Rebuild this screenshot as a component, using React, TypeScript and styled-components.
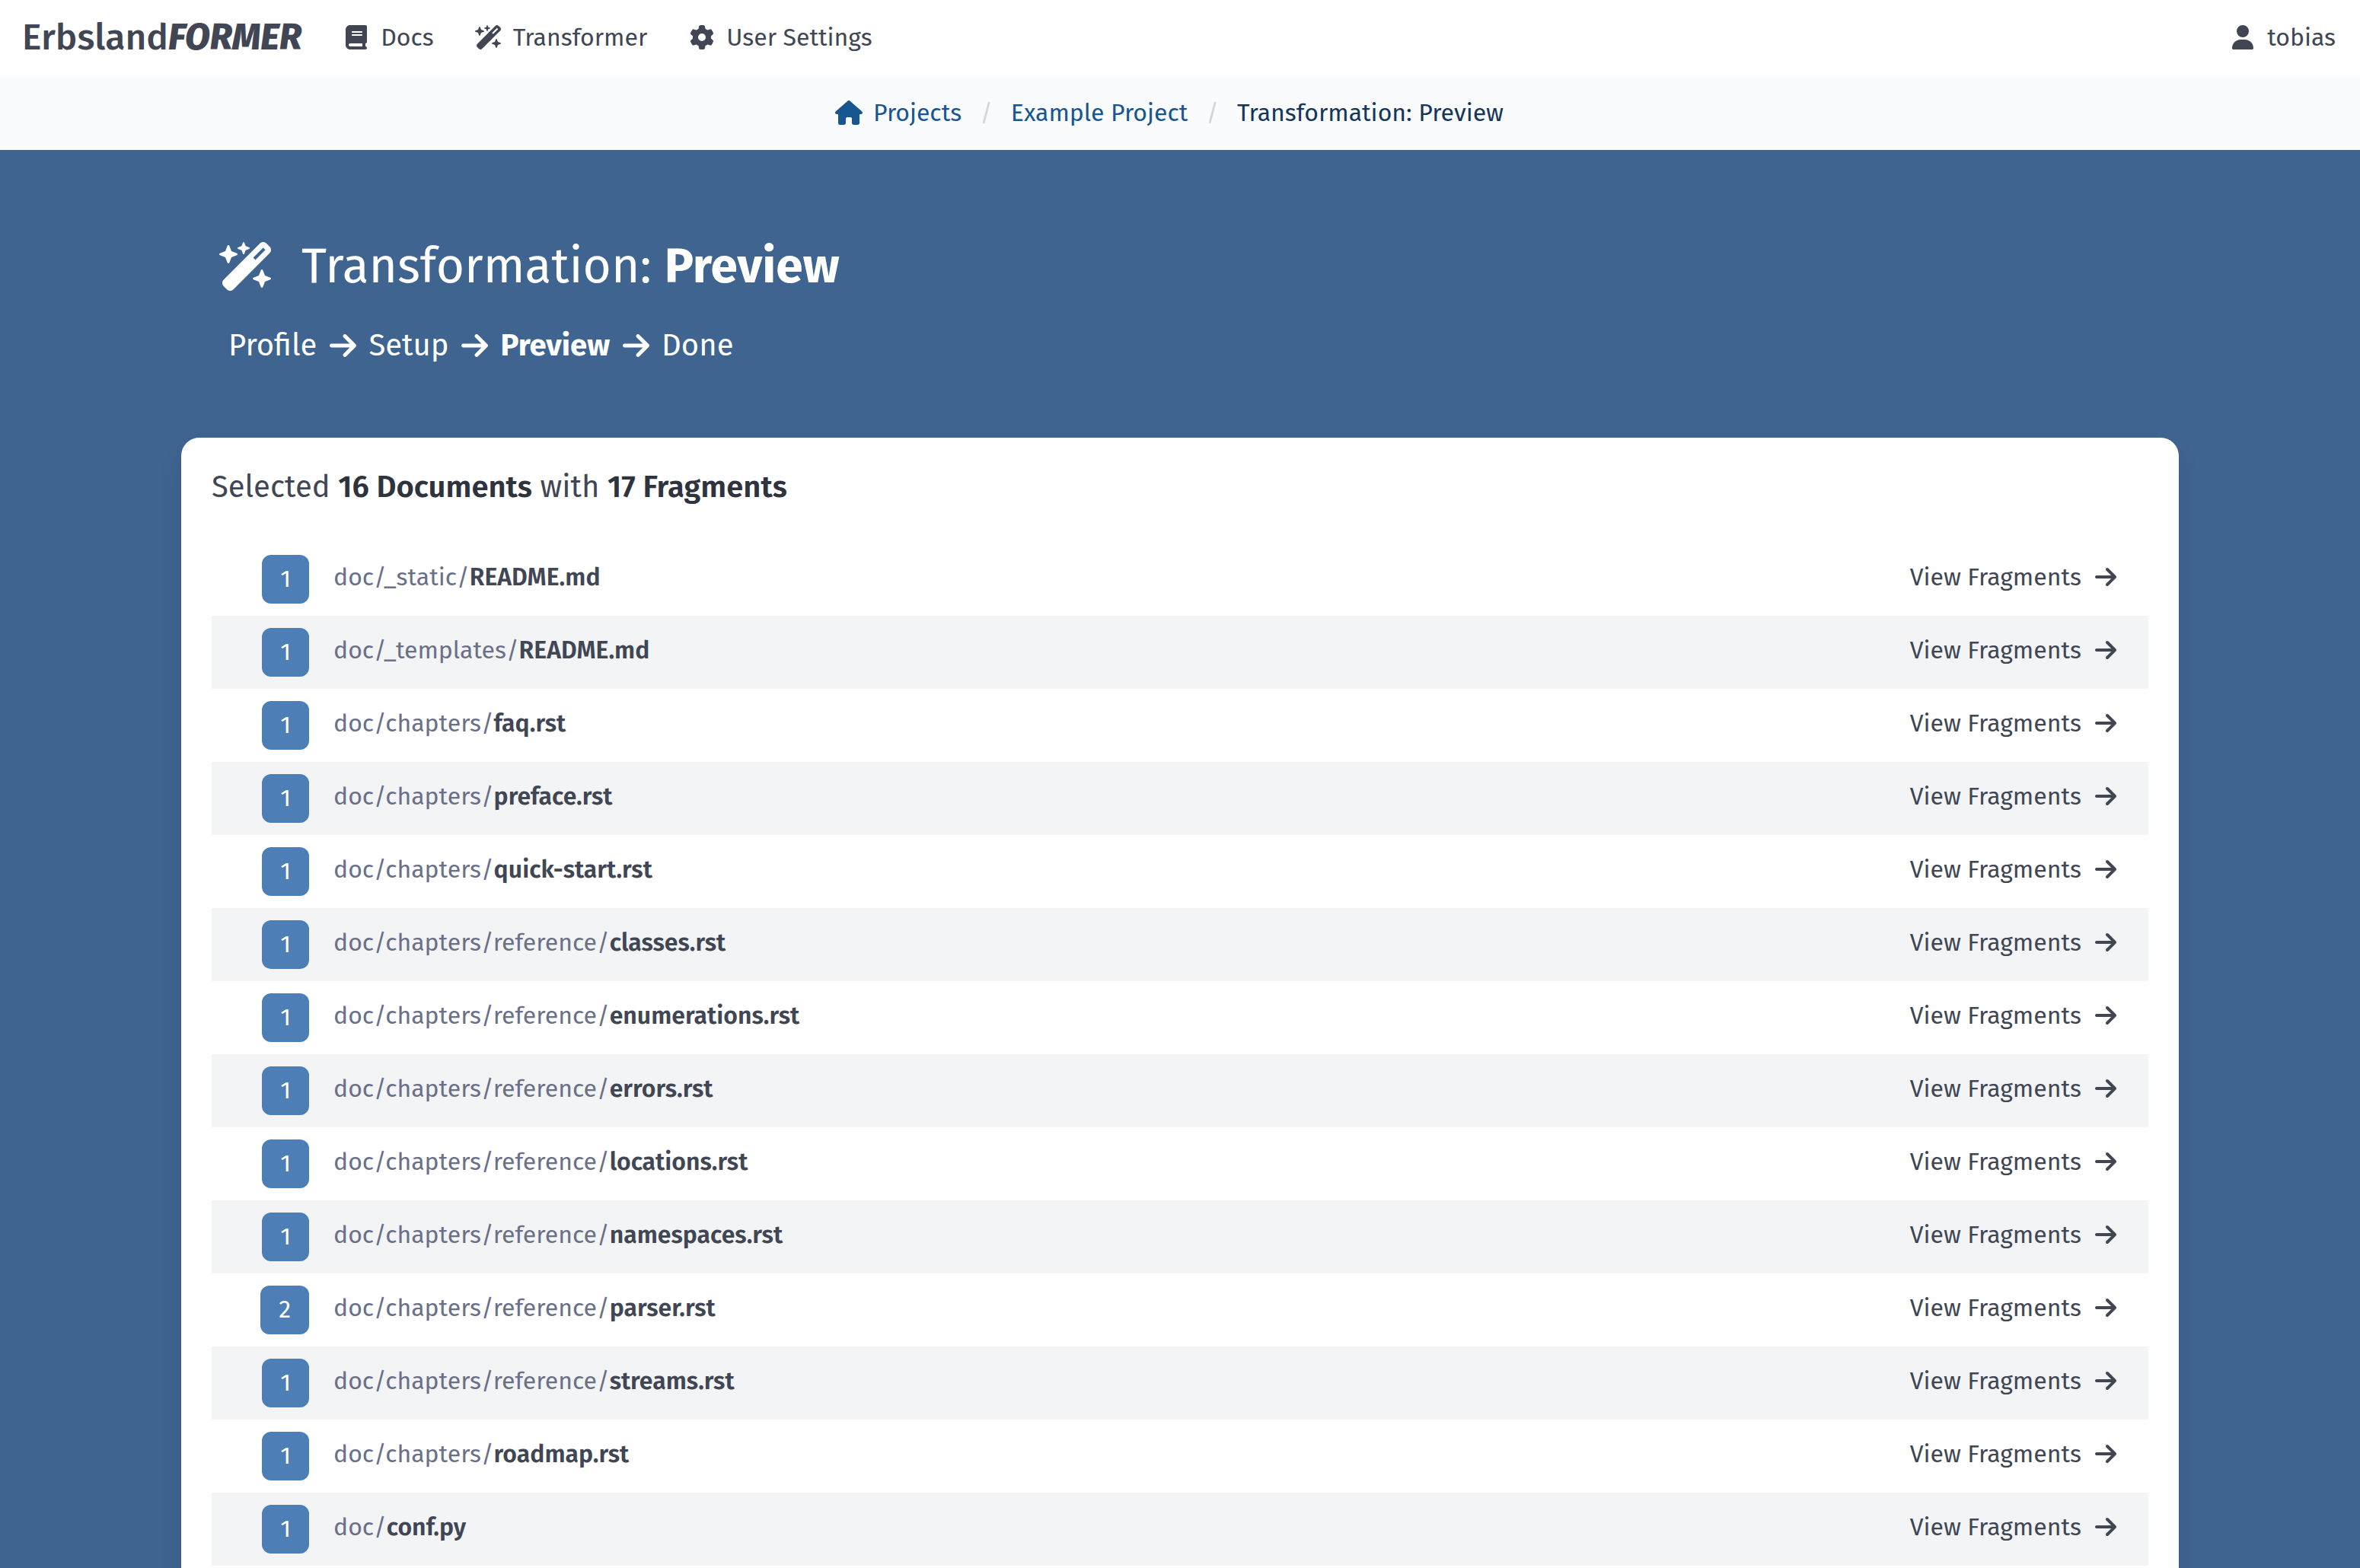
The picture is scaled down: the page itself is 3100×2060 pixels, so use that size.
import React from "react";
import styled, { createGlobalStyle } from "styled-components";
import {
  FaArrowRight,
  FaBook,
  FaGear,
  FaHouse,
  FaUser,
  FaWandMagicSparkles,
} from "react-icons/fa6";

const color = {
  text: "#404654",
  strong: "#2e333d",
  path: "#6a7088",
  hero: "#3f6490",
  badge: "#4d7eb5",
  stripe: "#f3f4f6",
  trail: "#fafbfd",
  link: "#18568f",
  current: "#14365c",
  divider: "#d2d5da",
};

const GlobalStyle = createGlobalStyle`
  *, *::before, *::after { box-sizing: border-box; }
  body {
    margin: 0;
    background: ${color.hero};
    color: ${color.text};
    font-family: "Fira Sans", "Noto Sans", sans-serif;
    font-size: 32px;
    line-height: 48px;
  }
  a { color: inherit; text-decoration: none; }
  svg { display: block; flex: none; }
`;

const Navbar = styled.nav`
  display: flex;
  align-items: center;
  height: 100px;
  padding: 0 32px 2px 29px;
  background: #fff;
`;

const Brand = styled.a`
  margin-right: 48px;
  font-size: 48px;
  font-weight: 500;

  em {
    font-weight: 800;
  }
`;

const NavLinks = styled.div`
  display: flex;
  flex: 1;
  gap: 48px;
`;

const IconLink = styled.a`
  display: inline-flex;
  align-items: center;
  gap: 8px;

  svg {
    width: 48px;
    height: 32px;
  }
`;

const Trail = styled.nav`
  display: flex;
  justify-content: center;
  align-items: center;
  height: 97px;
  padding-bottom: 1px;
  background: ${color.trail};
  color: ${color.link};

  ol {
    display: flex;
    margin: 0;
    padding: 0 10px 0 0;
    list-style: none;
  }

  li {
    display: flex;
    padding-right: 24px;
  }

  li + li::before {
    content: "/";
    padding-right: 24px;
    color: ${color.divider};
  }

  [aria-current] {
    color: ${color.current};
  }
`;

const Hero = styled.main`
  max-width: 2624px;
  margin: 0 auto;
  padding: 117px 0 96px;
`;

const Title = styled.h1`
  display: flex;
  align-items: center;
  gap: 36px;
  margin: 0 0 44px;
  padding: 0 50px;
  color: #fff;
  font-size: 64px;
  font-weight: 400;
  line-height: 72px;

  svg {
    width: 72px;
    height: 64px;
  }
`;

const Steps = styled.ol`
  display: flex;
  align-items: center;
  gap: 17px;
  margin: 0 0 97px;
  padding: 0 62px;
  color: #fff;
  font-size: 40px;
  list-style: none;

  li {
    display: flex;
    align-items: center;
    gap: 16px;
  }

  svg {
    width: 35px;
    height: 40px;
  }
`;

const Card = styled.section`
  padding: 40px;
  border-radius: 24px;
  background: #fff;
  box-shadow: 0 16px 32px rgba(10, 10, 40, 0.08);
`;

const Summary = styled.h2`
  margin: 0 0 48px;
  font-size: 40px;
  font-weight: 400;
  line-height: 50px;

  strong {
    color: ${color.strong};
    font-weight: 600;
  }
`;

const Documents = styled.table`
  width: 100%;
  border-collapse: collapse;

  tr:nth-child(even) {
    background: ${color.stripe};
  }

  td {
    height: 96px;
    padding: 16px;
    line-height: 58px;
    vertical-align: top;
  }
`;

const CountCell = styled.td`
  width: 144px;
`;

const Badge = styled.span`
  display: block;
  width: fit-content;
  height: 64px;
  margin-left: auto;
  padding: 0 24px;
  border-radius: 12px;
  background: ${color.badge};
  color: #fff;
  line-height: 62px;
`;

const PathCell = styled.td`
  color: ${color.path};

  strong {
    color: ${color.text};
    font-weight: 600;
  }
`;

const ActionCell = styled.td`
  && {
    padding-right: 42px;
  }
`;

const ViewLink = styled.a`
  display: flex;
  justify-content: flex-end;
  align-items: center;
  gap: 18px;

  svg {
    width: 28px;
    height: 32px;
  }
`;

type Doc = { folder: string; file: string; fragments: number };

const documents: Doc[] = [
  { folder: "doc/_static/", file: "README.md", fragments: 1 },
  { folder: "doc/_templates/", file: "README.md", fragments: 1 },
  { folder: "doc/chapters/", file: "faq.rst", fragments: 1 },
  { folder: "doc/chapters/", file: "preface.rst", fragments: 1 },
  { folder: "doc/chapters/", file: "quick-start.rst", fragments: 1 },
  { folder: "doc/chapters/reference/", file: "classes.rst", fragments: 1 },
  { folder: "doc/chapters/reference/", file: "enumerations.rst", fragments: 1 },
  { folder: "doc/chapters/reference/", file: "errors.rst", fragments: 1 },
  { folder: "doc/chapters/reference/", file: "locations.rst", fragments: 1 },
  { folder: "doc/chapters/reference/", file: "namespaces.rst", fragments: 1 },
  { folder: "doc/chapters/reference/", file: "parser.rst", fragments: 2 },
  { folder: "doc/chapters/reference/", file: "streams.rst", fragments: 1 },
  { folder: "doc/chapters/", file: "roadmap.rst", fragments: 1 },
  { folder: "doc/", file: "conf.py", fragments: 1 },
];

const steps = ["Profile", "Setup", "Preview", "Done"];

function NavItem({ icon, children }: { icon: React.ReactNode; children: React.ReactNode }) {
  return (
    <IconLink href="#">
      {icon}
      {children}
    </IconLink>
  );
}

export default function App() {
  return (
    <>
      <GlobalStyle />
      <Navbar>
        <Brand href="#">
          Erbsland<em>FORMER</em>
        </Brand>
        <NavLinks>
          <NavItem icon={<FaBook />}>Docs</NavItem>
          <NavItem icon={<FaWandMagicSparkles />}>Transformer</NavItem>
          <NavItem icon={<FaGear />}>User Settings</NavItem>
        </NavLinks>
        <NavItem icon={<FaUser />}>tobias</NavItem>
      </Navbar>
      <Trail>
        <ol>
          <li>
            <NavItem icon={<FaHouse />}>Projects</NavItem>
          </li>
          <li>
            <a href="#">Example Project</a>
          </li>
          <li>
            <a href="#" aria-current="page">
              Transformation: Preview
            </a>
          </li>
        </ol>
      </Trail>
      <Hero>
        <Title>
          <FaWandMagicSparkles />
          <span>
            Transformation: <strong>Preview</strong>
          </span>
        </Title>
        <Steps>
          {steps.map((step, i) => (
            <li key={step}>
              {i > 0 && <FaArrowRight />}
              {step === "Preview" ? <strong>{step}</strong> : <span>{step}</span>}
            </li>
          ))}
        </Steps>
        <Card>
          <Summary>
            Selected <strong>16 Documents</strong> with <strong>17 Fragments</strong>
          </Summary>
          <Documents>
            <tbody>
              {documents.map((doc) => (
                <tr key={doc.folder + doc.file}>
                  <CountCell>
                    <Badge>{doc.fragments}</Badge>
                  </CountCell>
                  <PathCell>
                    {doc.folder}
                    <strong>{doc.file}</strong>
                  </PathCell>
                  <ActionCell>
                    <ViewLink href="#">
                      View Fragments <FaArrowRight />
                    </ViewLink>
                  </ActionCell>
                </tr>
              ))}
            </tbody>
          </Documents>
        </Card>
      </Hero>
    </>
  );
}
